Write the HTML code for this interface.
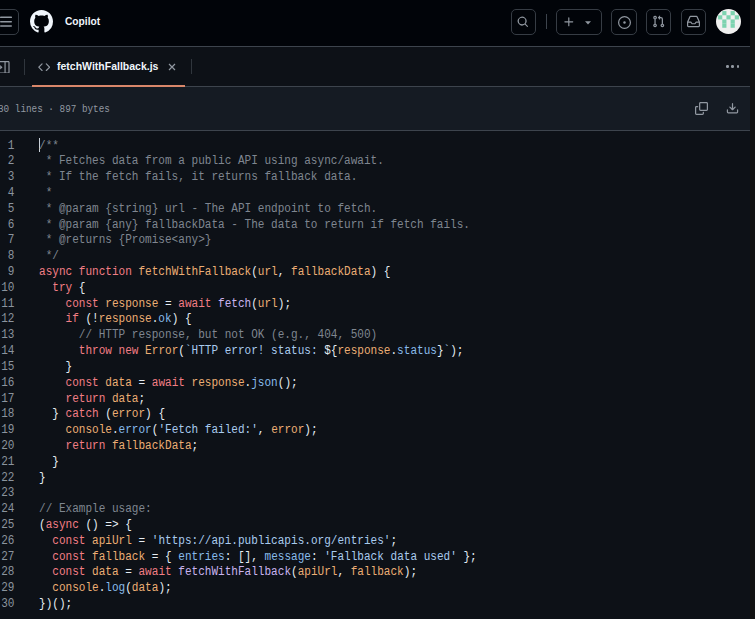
<!DOCTYPE html>
<html><head><meta charset="utf-8">
<style>
*{box-sizing:border-box;margin:0;padding:0}
html,body{width:755px;height:619px;overflow:hidden;background:#0d1117;font-family:"Liberation Sans",sans-serif}
.abs{position:absolute}
#hdr{position:absolute;left:0;top:0;width:750px;height:46px;background:#010409}
#hdrb{position:absolute;left:0;top:46px;width:750px;height:1px;background:#3d444d}
#tabs{position:absolute;left:0;top:47px;width:750px;height:39px;background:#0d1117}
#tabsb{position:absolute;left:0;top:86px;width:750px;height:1px;background:#3d444d}
#info{position:absolute;left:0;top:87px;width:750px;height:43px;background:#151b23}
#infob{position:absolute;left:0;top:130px;width:750px;height:1px;background:#3d444d}
#stripe{position:absolute;left:750px;top:0;width:5px;height:619px;background:#131313}
.btn{position:absolute;top:9px;height:25.6px;border:1px solid #363c44;border-radius:5px}
.ln{position:absolute;left:0;width:14px;text-align:right;font-family:"Liberation Mono",monospace;font-size:11px;color:#8b949e}
#code{position:absolute;left:39px;top:138.5px;font-family:"Liberation Mono",monospace;font-size:12px;line-height:15.81px;transform:scaleX(0.9208);transform-origin:0 0;color:#e6edf3;white-space:pre}
#nums{position:absolute;left:0;top:138.5px;width:14.5px;text-align:right;font-family:"Liberation Mono",monospace;font-size:12px;line-height:15.81px;transform:scaleX(0.92);transform-origin:100% 0;color:#8b949e;white-space:pre}
.k{color:#f27e85}.v{color:#ecae74}.f{color:#c9b4ef}.p{color:#88bbeb}.s{color:#a9cbee}.c{color:#7f8690}
</style></head><body>
<div id="hdr"></div>
<div id="hdrb"></div>
<div id="tabs"></div>
<div id="tabsb"></div>
<div id="info"></div>
<div id="infob"></div>
<div id="stripe"></div>

<!-- header left -->
<div class="btn" style="left:-8px;width:27px"></div>
<svg class="abs" style="left:0;top:16px" width="13" height="12"><rect x="0" y="0.6" width="12" height="1.5" rx=".7" fill="#9198a1"/><rect x="0" y="5" width="12" height="1.5" rx=".7" fill="#9198a1"/><rect x="0" y="9.3" width="12" height="1.5" rx=".7" fill="#9198a1"/></svg>
<svg class="abs" style="left:29.8px;top:10.4px" width="23" height="23" viewBox="0 0 16 16"><path fill="#f0f6fc" d="M8 0c4.42 0 8 3.58 8 8a8.013 8.013 0 0 1-5.45 7.59c-.4.08-.55-.17-.55-.38 0-.27.01-1.13.01-2.2 0-.75-.25-1.23-.54-1.48 1.78-.2 3.65-.88 3.65-3.95 0-.88-.31-1.59-.82-2.15.08-.2.36-1.02-.08-2.12 0 0-.67-.22-2.2.82-.64-.18-1.32-.27-2-.27-.68 0-1.36.09-2 .27-1.53-1.03-2.2-.82-2.2-.82-.44 1.1-.16 1.92-.08 2.12-.51.56-.82 1.28-.82 2.15 0 3.06 1.86 3.75 3.64 3.95-.23.2-.44.55-.51 1.07-.46.21-1.61.55-2.33-.66-.15-.24-.6-.83-1.23-.82-.67.01-.27.38.01.53.34.19.73.9.82 1.13.16.45.68 1.31 2.69.94 0 .67.01 1.3.01 1.49 0 .21-.15.45-.55.38A7.995 7.995 0 0 1 0 8c0-4.42 3.58-8 8-8Z"/></svg>
<div class="abs" style="left:65px;top:16px;font-size:10.2px;font-weight:bold;color:#f0f6fc">Copilot</div>

<!-- header right -->
<div class="btn" style="left:511px;width:25px"></div>
<svg class="abs" style="left:517.2px;top:15.8px" width="11.7" height="11.7" viewBox="0 0 16 16"><path fill="#9198a1" d="M10.68 11.74a6 6 0 0 1-7.922-8.982 6 6 0 0 1 8.982 7.922l3.04 3.04a.749.749 0 0 1-.326 1.275.749.749 0 0 1-.734-.215ZM11.5 7a4.499 4.499 0 1 0-8.997 0A4.499 4.499 0 0 0 11.5 7Z"/></svg>
<div class="abs" style="left:545.5px;top:14px;width:1px;height:15px;background:#3d444d"></div>
<div class="btn" style="left:556px;width:46px"></div>
<svg class="abs" style="left:564px;top:17px" width="10" height="10" viewBox="0 0 16 16"><path fill="#9198a1" d="M7.75 2a.75.75 0 0 1 .75.75V7h4.25a.75.75 0 0 1 0 1.5H8.5v4.25a.75.75 0 0 1-1.5 0V8.5H2.75a.75.75 0 0 1 0-1.5H7V2.75A.75.75 0 0 1 7.75 2Z" transform="translate(8 8) scale(1.25) translate(-8 -8)"/></svg>
<svg class="abs" style="left:585.2px;top:20.5px" width="6" height="4"><path d="M0 0.2h6L3 3.4Z" fill="#9198a1"/></svg>
<div class="btn" style="left:611px;width:26px"></div>
<svg class="abs" style="left:617.5px;top:15.5px" width="13" height="13" viewBox="0 0 16 16"><path fill="#9198a1" d="M8 9.5a1.5 1.5 0 1 0 0-3 1.5 1.5 0 0 0 0 3Z"/><path fill="#9198a1" d="M8 0a8 8 0 1 1 0 16A8 8 0 0 1 8 0ZM1.5 8a6.5 6.5 0 1 0 13 0 6.5 6.5 0 0 0-13 0Z"/></svg>
<div class="btn" style="left:646px;width:25px"></div>
<svg class="abs" style="left:652px;top:15px" width="13" height="13" viewBox="0 0 16 16"><path fill="#9198a1" d="M1.5 3.25a2.25 2.25 0 1 1 3 2.122v5.256a2.251 2.251 0 1 1-1.5 0V5.372A2.25 2.25 0 0 1 1.5 3.25Zm5.677-.177L9.573.677A.25.25 0 0 1 10 .854V2.5h1A2.5 2.5 0 0 1 13.5 5v5.628a2.251 2.251 0 1 1-1.5 0V5a1 1 0 0 0-1-1h-1v1.646a.25.25 0 0 1-.427.177L7.177 3.427a.25.25 0 0 1 0-.354ZM3.75 2.5a.75.75 0 1 0 0 1.5.75.75 0 0 0 0-1.5Zm0 9.5a.75.75 0 1 0 0 1.5.75.75 0 0 0 0-1.5Zm8.25.75a.75.75 0 1 0 1.5 0 .75.75 0 0 0-1.5 0Z"/></svg>
<div class="btn" style="left:681px;width:25px"></div>
<svg class="abs" style="left:687px;top:15px" width="13" height="13" viewBox="0 0 16 16"><path fill="#9198a1" d="M2.8 2.06A1.75 1.75 0 0 1 4.41 1h7.18c.7 0 1.333.417 1.61 1.06l2.74 6.395c.04.093.06.194.06.295v4.5A1.75 1.75 0 0 1 14.25 15H1.75A1.75 1.75 0 0 1 0 13.25v-4.5c0-.101.02-.202.06-.295Zm1.61.44a.25.25 0 0 0-.23.152L1.887 8H4.75a.75.75 0 0 1 .6.3L6.625 10h2.75l1.275-1.7a.75.75 0 0 1 .6-.3h2.863L11.82 2.652a.25.25 0 0 0-.23-.152Zm10.09 7h-2.875l-1.275 1.7a.75.75 0 0 1-.6.3h-3.5a.75.75 0 0 1-.6-.3L4.375 9.5H1.5v3.75c0 .138.112.25.25.25h12.5a.25.25 0 0 0 .25-.25Z"/></svg>
<svg class="abs" style="left:716.4px;top:9.2px" width="25" height="25" viewBox="0 0 25 25"><circle cx="12.5" cy="12.5" r="12.5" fill="#f0f0f0"/><g fill="#7dd3b0"><rect x="6.25" y="2.08" width="4.2" height="4.2"/><rect x="14.59" y="2.08" width="4.2" height="4.2"/><rect x="2.08" y="6.25" width="4.2" height="4.2"/><rect x="10.42" y="6.25" width="4.2" height="4.2"/><rect x="18.76" y="6.25" width="4.2" height="4.2"/><rect x="6.25" y="10.42" width="4.2" height="4.2"/><rect x="14.59" y="10.42" width="4.2" height="4.2"/><rect x="6.25" y="14.59" width="4.2" height="4.2"/><rect x="14.59" y="14.59" width="4.2" height="4.2"/></g></svg>

<!-- tab bar -->
<div id="tabsc">
<svg class="abs" style="left:-2.7px;top:60.7px" width="12.6" height="12.6" viewBox="0 0 16 16"><path fill="#9198a1" d="M6.823 7.823a.25.25 0 0 1 0 .354l-2.396 2.396A.25.25 0 0 1 4 10.396V5.604a.25.25 0 0 1 .427-.177Z"/><path fill="#9198a1" d="M1.75 0h12.5C15.216 0 16 .784 16 1.75v12.5A1.75 1.75 0 0 1 14.25 16H1.75A1.75 1.75 0 0 1 0 14.25V1.75C0 .784.784 0 1.75 0ZM1.5 1.75v12.5c0 .138.112.25.25.25H9.5v-13H1.75a.25.25 0 0 0-.25.25ZM11 14.5h3.25a.25.25 0 0 0 .25-.25V1.75a.25.25 0 0 0-.25-.25H11Z"/></svg>
<div class="abs" style="left:24px;top:59px;width:1px;height:16px;background:#30363d"></div>
<svg class="abs" style="left:38.1px;top:60.9px" width="12.4" height="12.4" viewBox="0 0 16 16"><path fill="#9198a1" d="m11.28 3.22 4.25 4.25a.75.75 0 0 1 0 1.06l-4.25 4.25a.749.749 0 0 1-1.275-.326.749.749 0 0 1 .215-.734L13.94 8l-3.72-3.72a.749.749 0 0 1 .326-1.275.749.749 0 0 1 .734.215Zm-6.56 0a.751.751 0 0 1 1.042.018.751.751 0 0 1 .018 1.042L2.06 8l3.72 3.72a.749.749 0 0 1-.326 1.275.749.749 0 0 1-.734-.215L.47 8.53a.75.75 0 0 1 0-1.06Z"/></svg>
<div class="abs" style="left:57px;top:60px;font-size:10.5px;font-weight:bold;color:#f0f6fc">fetchWithFallback.js</div>
<svg class="abs" style="left:168px;top:62.5px" width="8" height="8" viewBox="0 0 8 8"><path d="M1 1L7 7M7 1L1 7" stroke="#9198a1" stroke-width="1.2"/></svg>
<div class="abs" style="left:32px;top:85px;width:153px;height:2px;background:#d9876a"></div>
<div class="abs" style="left:190.5px;top:59px;width:1px;height:15px;background:#30363d"></div>
<div class="abs" style="left:726.4px;top:65.3px;width:2.4px;height:2.4px;border-radius:1.2px;background:#9198a1"></div>
<div class="abs" style="left:731.4px;top:65.3px;width:2.4px;height:2.4px;border-radius:1.2px;background:#9198a1"></div>
<div class="abs" style="left:736.6px;top:65.3px;width:2.4px;height:2.4px;border-radius:1.2px;background:#9198a1"></div>
</div>

<!-- info bar -->
<div id="infoc">
<div class="abs" style="left:-1.7px;top:104.2px;font-family:'Liberation Mono',monospace;font-size:10.2px;transform:scaleX(0.915);transform-origin:0 0;color:#9198a1;white-space:pre">30 lines · 897 bytes</div>
<svg class="abs" style="left:694.8px;top:102px" width="13" height="13" viewBox="0 0 16 16"><path fill="#9198a1" d="M0 6.75C0 5.784.784 5 1.75 5h1.5a.75.75 0 0 1 0 1.5h-1.5a.25.25 0 0 0-.25.25v7.5c0 .138.112.25.25.25h7.5a.25.25 0 0 0 .25-.25v-1.5a.75.75 0 0 1 1.5 0v1.5A1.75 1.75 0 0 1 9.25 16h-7.5A1.75 1.75 0 0 1 0 14.25Z"/><path fill="#9198a1" d="M5 1.75C5 .784 5.784 0 6.75 0h7.5C15.216 0 16 .784 16 1.75v7.5A1.75 1.75 0 0 1 14.25 11h-7.5A1.75 1.75 0 0 1 5 9.25Zm1.75-.25a.25.25 0 0 0-.25.25v7.5c0 .138.112.25.25.25h7.5a.25.25 0 0 0 .25-.25v-7.5a.25.25 0 0 0-.25-.25Z"/></svg>
<svg class="abs" style="left:726px;top:101.5px" width="13" height="13" viewBox="0 0 16 16"><path fill="#9198a1" d="M2.75 14A1.75 1.75 0 0 1 1 12.25v-2.5a.75.75 0 0 1 1.5 0v2.5c0 .138.112.25.25.25h10.5a.25.25 0 0 0 .25-.25v-2.5a.75.75 0 0 1 1.5 0v2.5A1.75 1.75 0 0 1 13.25 14Z"/><path fill="#9198a1" d="M7.25 7.689V2a.75.75 0 0 1 1.5 0v5.689l1.97-1.969a.749.749 0 0 1 1.275.326.749.749 0 0 1-.215.734l-3.25 3.25a.75.75 0 0 1-1.06 0L4.22 6.78a.749.749 0 0 1 .326-1.275.749.749 0 0 1 .734.215l1.97 1.969Z"/></svg>
</div>

<div id="nums">1
2
3
4
5
6
7
8
9
10
11
12
13
14
15
16
17
18
19
20
21
22
23
24
25
26
27
28
29
30</div>
<div class="abs" style="left:39px;top:138.2px;width:1px;height:13.6px;background:#c9d1d9"></div>
<div id="code"><span class="c">/**</span>
<span class="c"> * Fetches data from a public API using async/await.</span>
<span class="c"> * If the fetch fails, it returns fallback data.</span>
<span class="c"> *</span>
<span class="c"> * @param {string} url - The API endpoint to fetch.</span>
<span class="c"> * @param {any} fallbackData - The data to return if fetch fails.</span>
<span class="c"> * @returns {Promise&lt;any&gt;}</span>
<span class="c"> */</span>
<span class="k">async</span> <span class="k">function</span> <span class="v">fetchWithFallback</span>(<span class="v">url</span>, <span class="v">fallbackData</span>) {
  <span class="k">try</span> {
    <span class="k">const</span> <span class="v">response</span> = <span class="k">await</span> <span class="f">fetch</span>(<span class="v">url</span>);
    <span class="k">if</span> (!<span class="v">response</span>.<span class="p">ok</span>) {
      <span class="c">// HTTP response, but not OK (e.g., 404, 500)</span>
      <span class="k">throw</span> <span class="k">new</span> <span class="v">Error</span>(<span class="s">`HTTP error! status: </span>${<span class="v">response</span>.<span class="p">status</span>}<span class="s">`</span>);
    }
    <span class="k">const</span> <span class="v">data</span> = <span class="k">await</span> <span class="v">response</span>.<span class="p">json</span>();
    <span class="k">return</span> <span class="v">data</span>;
  } <span class="k">catch</span> (<span class="v">error</span>) {
    <span class="v">console</span>.<span class="p">error</span>(<span class="s">&#x27;Fetch failed:&#x27;</span>, <span class="v">error</span>);
    <span class="k">return</span> <span class="v">fallbackData</span>;
  }
}

<span class="c">// Example usage:</span>
(<span class="k">async</span> () =&gt; {
  <span class="k">const</span> <span class="v">apiUrl</span> = <span class="s">&#x27;https://api.publicapis.org/entries&#x27;</span>;
  <span class="k">const</span> <span class="v">fallback</span> = { <span class="p">entries</span>: [], <span class="p">message</span>: <span class="s">&#x27;Fallback data used&#x27;</span> };
  <span class="k">const</span> <span class="v">data</span> = <span class="k">await</span> <span class="f">fetchWithFallback</span>(<span class="v">apiUrl</span>, <span class="v">fallback</span>);
  <span class="v">console</span>.<span class="p">log</span>(<span class="v">data</span>);
})();</div>
</body></html>
